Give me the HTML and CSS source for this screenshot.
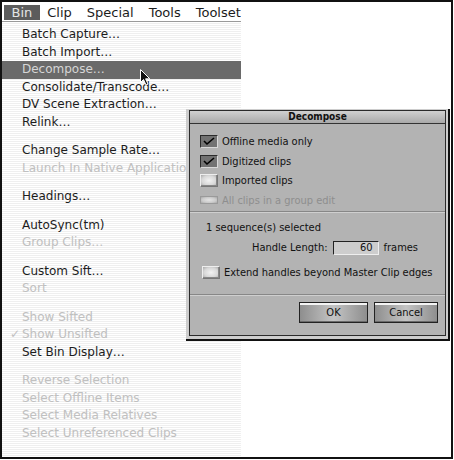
FILE: index.html
```html
<!DOCTYPE html>
<html>
<head>
<meta charset="utf-8">
<link rel="stylesheet" href="styles.css">
</head>
<body>
<div class="frame">
  <div class="menu">
    <div class="menubar">
      <span class="mb-item active">Bin</span>
      <span class="mb-item">Clip</span>
      <span class="mb-item">Special</span>
      <span class="mb-item">Tools</span>
      <span class="mb-item">Toolset</span>
    </div>
    <div class="dropdown">
      <div class="item">Batch Capture…</div>
      <div class="item">Batch Import…</div>
      <div class="item hl">Decompose…</div>
      <div class="item">Consolidate/Transcode…</div>
      <div class="item">DV Scene Extraction…</div>
      <div class="item">Relink…</div>
      <div class="sep"></div>
      <div class="item">Change Sample Rate…</div>
      <div class="item dis">Launch In Native Application</div>
      <div class="sep"></div>
      <div class="item">Headings…</div>
      <div class="sep"></div>
      <div class="item">AutoSync(tm)</div>
      <div class="item dis">Group Clips…</div>
      <div class="sep"></div>
      <div class="item">Custom Sift…</div>
      <div class="item dis">Sort</div>
      <div class="sep"></div>
      <div class="item dis">Show Sifted</div>
      <div class="item dis"><span class="check">✓</span>Show Unsifted</div>
      <div class="item">Set Bin Display…</div>
      <div class="sep"></div>
      <div class="item dis">Reverse Selection</div>
      <div class="item dis">Select Offline Items</div>
      <div class="item dis">Select Media Relatives</div>
      <div class="item dis">Select Unreferenced Clips</div>
    </div>
  </div>

  <svg class="cursor" width="11" height="17" viewBox="0 0 11 17">
    <path d="M0.5 0.5 L0.5 13.5 L3.5 10.5 L6 16 L8 15 L5.6 9.8 L9.8 9.8 Z" fill="#111" stroke="#fff" stroke-width="1"/>
  </svg>

  <div class="dialog">
    <div class="dlg-inner">
      <div class="dlg-title">Decompose</div>
      <div class="dlg-section checks">
        <div class="cb-row"><span class="cb on"><svg width="12" height="9" viewBox="0 0 12 9"><path d="M1 4 L4 7 L11 1" fill="none" stroke="#000" stroke-width="1.6"/></svg></span><span>Offline media only</span></div>
        <div class="cb-row"><span class="cb on"><svg width="12" height="9" viewBox="0 0 12 9"><path d="M1 4 L4 7 L11 1" fill="none" stroke="#000" stroke-width="1.6"/></svg></span><span>Digitized clips</span></div>
        <div class="cb-row"><span class="cb off"></span><span>Imported clips</span></div>
        <div class="cb-row disabled"><span class="cb dim"></span><span>All clips in a group edit</span></div>
      </div>
      <div class="dlg-sep"></div>
      <div class="dlg-section handles">
        <div class="seq-line">1 sequence(s) selected</div>
        <div class="handle-row">
          <span>Handle Length:</span>
          <span class="field">60</span>
          <span>frames</span>
        </div>
        <div class="cb-row extend"><span class="cb off"></span><span>Extend handles beyond Master Clip edges</span></div>
      </div>
      <div class="dlg-sep"></div>
      <div class="buttons">
        <span class="btn ok">OK</span>
        <span class="btn cancel">Cancel</span>
      </div>
    </div>
  </div>
</div>
</body>
</html>
```

FILE: styles.css
```css
* { box-sizing: border-box; }
html, body { margin: 0; padding: 0; background: #fff; }

.frame {
  position: relative;
  width: 453px;
  height: 459px;
  border: 2px solid #111;
  background: #fff;
  overflow: hidden;
}

.menu {
  width: 239px;
  height: 100%;
  display: flex;
  flex-direction: column;
  font-family: "DejaVu Sans", sans-serif;
  font-size: 12px;
  color: #1c1c1c;
}

.menubar {
  height: 20px;
  display: flex;
  align-items: flex-start;
  padding: 3px 0 0 2px;
  background: #fff;
  border-bottom: 1px solid #9a9a9a;
  white-space: nowrap;
  overflow: hidden;
  font-size: 13px;
}
.mb-item {
  height: 15px;
  line-height: 15px;
  padding: 0 7.5px;
  flex: none;
}
.mb-item.active { background: #5c5c5c; color: #e4e4e4; }

.dropdown {
  flex: 1;
  padding-top: 4px;
  background: repeating-linear-gradient(to bottom, #ffffff 0 1px, #efefef 1px 2px);
}
.item {
  height: 17.5px;
  line-height: 17.5px;
  padding-left: 20px;
  white-space: nowrap;
  overflow: hidden;
}
.item.hl { background: #6a6a6a; color: #d6d6d6; }
.item.dis { color: #c0c0c0; }
.sep { height: 11px; }
.check {
  display: inline-block;
  width: 14px;
  margin-left: -14px;
  text-align: center;
}

.cursor {
  position: absolute;
  left: 138px;
  top: 67px;
}

/* dialog */
.dialog {
  position: absolute;
  left: 184px;
  top: 107px;
  width: 264px;
  height: 232px;
  background: #cdcdcd;
  border-right: 2px solid #111;
  border-bottom: 2px solid #111;
  padding: 1px 2px 3px 3px;
  font-family: "Liberation Sans Narrow", "DejaVu Sans Condensed", "Liberation Sans", sans-serif;
  font-size: 11px;
  color: #111;
}
.dlg-inner {
  height: 100%;
  border: 1px solid #2a2a2a;
  background: #b3b3b3;
  display: flex;
  flex-direction: column;
}
.dlg-title {
  height: 13px;
  line-height: 12px;
  text-align: center;
  font-weight: bold;
  font-size: 10px;
  background: linear-gradient(to bottom, #d0d0d0, #a9a9a9);
  border-bottom: 1px solid #333;
}
.checks {
  padding: 8px 0 0 10px;
}
.cb-row {
  height: 19.5px;
  display: flex;
  align-items: center;
  gap: 4px;
}
.cb-row.disabled { color: #8e8e8e; }
.cb {
  width: 18px;
  height: 13px;
  display: inline-flex;
  align-items: center;
  justify-content: center;
  flex: none;
}
.cb.on {
  background: #727272;
  border-top: 1px solid #2b2b2b;
  border-left: 1px solid #2b2b2b;
  border-bottom: 1px solid #d8d8d8;
  border-right: 1px solid #d8d8d8;
}
.cb.off {
  background: radial-gradient(ellipse at center, #f2f2f2 0%, #d8d8d8 60%, #a8a8a8 100%);
  border: 1px solid #777;
  border-top-color: #eee;
  border-left-color: #eee;
  box-shadow: inset -1px -1px 0 #888;
}
.cb.dim {
  height: 8px;
  background: radial-gradient(ellipse at center, #e4e4e4 0%, #cbcbcb 60%, #a6a6a6 100%);
  border: 1px solid #9a9a9a;
}

.dlg-sep {
  height: 2px;
  border-top: 1px solid #878787;
  border-bottom: 1px solid #cfcfcf;
  margin-top: 1px;
}

.handles {
  padding-top: 8px;
  height: 80px;
}
.seq-line {
  height: 14px;
  line-height: 14px;
  padding-left: 16px;
}
.handle-row {
  margin-top: 6px;
  height: 13px;
  display: flex;
  align-items: center;
  gap: 5px;
  padding-left: 62px;
}
.field {
  width: 46px;
  height: 14px;
  line-height: 12px;
  text-align: right;
  padding-right: 5px;
  background: #cdcdcd;
  border-top: 1px solid #222;
  border-left: 1px solid #222;
  border-right: 1px solid #eee;
  border-bottom: 1px solid #eee;
}
.extend {
  margin-top: 9px;
  padding-left: 12px;
}

.buttons {
  display: flex;
  justify-content: flex-end;
  gap: 6px;
  padding: 6px 7px 0 0;
}
.btn {
  height: 21px;
  line-height: 19px;
  text-align: center;
  border: 1px solid #222;
  background: linear-gradient(to right, #8e8e8e, #c4c4c4 50%, #8e8e8e);
  box-shadow: inset 0 2px 0 #f4f4f4, inset 0 -1px 0 #6a6a6a;
}
.btn.ok { width: 69px; }
.btn.cancel { width: 64px; }
```
